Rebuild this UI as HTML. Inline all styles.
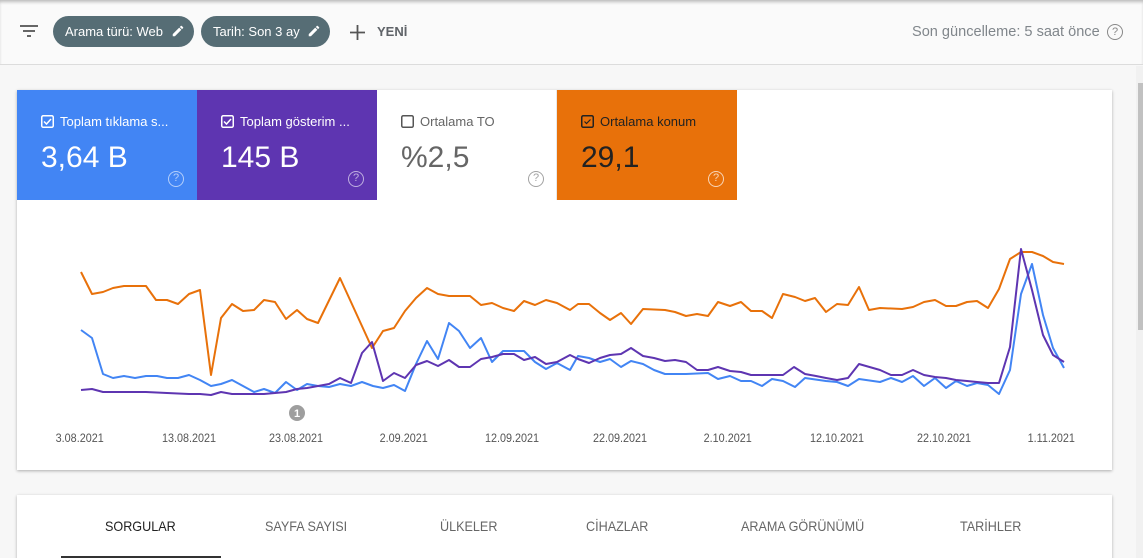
<!DOCTYPE html>
<html><head><meta charset="utf-8"><style>
*{margin:0;padding:0;box-sizing:border-box}
html,body{width:1143px;height:558px;overflow:hidden}
body{background:#f7f7f7;font-family:"Liberation Sans",Arial,sans-serif;position:relative}
.top{position:absolute;left:0;top:0;width:1143px;height:65px;background:#fafafa;border-bottom:1px solid #dcdcdc;box-shadow:inset 0 3px 3px -1px #bbb}
.chip{position:absolute;top:16px;height:31px;border-radius:16px;background:#566d75;color:#fff;font-size:13px;line-height:31px;padding-left:12px}
.chip svg{position:absolute;right:9px;top:8px}
.card{position:absolute;left:17px;top:90px;width:1095px;height:380px;background:#fff;box-shadow:0 1px 3px rgba(0,0,0,.3)}
.tile{position:absolute;top:0;width:180px;height:110px}
.tile .lb{position:absolute;left:24px;top:24px;font-size:13px;white-space:nowrap}
.tile .lb svg{vertical-align:-2px;margin-right:6px}
.tile .v{position:absolute;left:24px;top:51px;font-size:30px}
.tile .q{position:absolute;left:151px;top:81px;width:16px;height:16px;border:1.5px solid;border-radius:50%;font-size:11px;text-align:center;line-height:13px;opacity:.6}
.ax{position:absolute;top:341px;font-size:12px;color:#555;transform:scaleX(.9)}
.tabs{position:absolute;left:17px;top:495px;width:1095px;height:70px;background:#fff;box-shadow:0 1px 3px rgba(0,0,0,.3)}
.tab{position:absolute;top:23px;font-size:14px;color:#666;transform:scaleX(.9);transform-origin:left}
</style></head><body>
<div class="top">
<svg style="position:absolute;left:20px;top:24px" width="18" height="14"><path d="M0 2h18M3 7h12M7 12h4" stroke="#666" stroke-width="2"/></svg>
<div class="chip" style="left:53px;width:141px">Arama türü: Web<svg width="14" height="14" viewBox="0 0 24 24"><path fill="#fff" d="M3 17.25V21h3.75L17.81 9.94l-3.75-3.75L3 17.25zM20.71 7.04a1 1 0 000-1.41l-2.34-2.34a1 1 0 00-1.41 0l-1.83 1.83 3.75 3.75 1.83-1.83z"/></svg></div>
<div class="chip" style="left:201px;width:129px">Tarih: Son 3 ay<svg width="14" height="14" viewBox="0 0 24 24"><path fill="#fff" d="M3 17.25V21h3.75L17.81 9.94l-3.75-3.75L3 17.25zM20.71 7.04a1 1 0 000-1.41l-2.34-2.34a1 1 0 00-1.41 0l-1.83 1.83 3.75 3.75 1.83-1.83z"/></svg></div>
<svg style="position:absolute;left:350px;top:25px" width="15" height="15"><path d="M7.5 0v15M0 7.5h15" stroke="#555" stroke-width="1.8"/></svg>
<div style="position:absolute;left:377px;top:24px;font-size:13px;color:#5f6368;font-weight:bold">YENİ</div>
<div style="position:absolute;left:912px;top:23px;font-size:15px;color:#80868b;transform:scaleX(.97);transform-origin:left">Son güncelleme: 5 saat önce</div>
<div style="position:absolute;left:1107px;top:24px;width:16px;height:16px;border:1.4px solid #888;border-radius:50%;font-size:11px;color:#888;text-align:center;line-height:14px">?</div>
</div>
<div style="position:absolute;left:1136px;top:66px;width:7px;height:492px;background:#f1f1f1"></div>
<div style="position:absolute;left:1138px;top:83px;width:5px;height:247px;background:#c1c1c1"></div>
<div class="card">
<div class="tile" style="left:0;background:#4285f4;color:#fff"><div class="lb"><svg width="13" height="13"><rect x=".75" y=".75" width="11.5" height="11.5" rx="1.5" fill="none" stroke="#fff" stroke-width="1.5"/><path d="M3 6.5l2.5 2.5L10 4" fill="none" stroke="#fff" stroke-width="1.5"/></svg>Toplam tıklama s...</div><div class="v">3,64 B</div><div class="q">?</div></div>
<div class="tile" style="left:180px;background:#5e35b1;color:#fff"><div class="lb"><svg width="13" height="13"><rect x=".75" y=".75" width="11.5" height="11.5" rx="1.5" fill="none" stroke="#fff" stroke-width="1.5"/><path d="M3 6.5l2.5 2.5L10 4" fill="none" stroke="#fff" stroke-width="1.5"/></svg>Toplam gösterim ...</div><div class="v">145 B</div><div class="q">?</div></div>
<div class="tile" style="left:360px;background:#fff;color:#666;border-right:1px solid #e8e8e8"><div class="lb"><svg width="13" height="13"><rect x=".75" y=".75" width="11.5" height="11.5" rx="1.5" fill="none" stroke="#555" stroke-width="1.5"/></svg>Ortalama TO</div><div class="v">%2,5</div><div class="q">?</div></div>
<div class="tile" style="left:540px;background:#e8710a;color:#222"><div class="lb"><svg width="13" height="13"><rect x=".75" y=".75" width="11.5" height="11.5" rx="1.5" fill="none" stroke="#222" stroke-width="1.5"/><path d="M3.5 6.5l2 2L9.5 4.5" fill="none" stroke="#222" stroke-width="1.2"/></svg>Ortalama konum</div><div class="v">29,1</div><div class="q" style="color:#fff;opacity:.7">?</div></div>
<div class="ax" style="left:36px">3.08.2021</div><div class="ax" style="left:142px">13.08.2021</div><div class="ax" style="left:249px">23.08.2021</div><div class="ax" style="left:360px">2.09.2021</div><div class="ax" style="left:465px">12.09.2021</div><div class="ax" style="left:573px">22.09.2021</div><div class="ax" style="left:684px">2.10.2021</div><div class="ax" style="left:790px">12.10.2021</div><div class="ax" style="left:897px">22.10.2021</div><div class="ax" style="left:1008px">1.11.2021</div>
</div>
<svg style="position:absolute;left:0;top:0" width="1143" height="470" fill="none" stroke-width="2" stroke-linejoin="round">
<polyline stroke="#e8710a" points="81,272 92,294 103,292 113,288 124,286 146,286 156,300 167,300 178,304 189,294 200,290 211,375 221,318 232,304 243,311 254,310 264,300 275,302 286,319 297,310 307,319 318,323 340,278 372,348 383,331 394,328 405,311 416,298 427,288 438,294 449,296 470,296 481,305 492,303 503,308 514,311 524,301 535,305 546,300 557,303 570,310 578,304 589,304 600,313 610,320 621,313 631,324 643,309 665,310 675,312 686,316 697,314 708,316 718,302 730,306 741,302 751,311 762,311 772,318 783,294 795,297 805,301 815,298 826,312 837,304 848,305 859,287 869,310 880,308 902,309 913,307 924,302 935,300 946,306 956,306 967,302 977,301 988,308 999,289 1010,259 1021,252 1032,252 1043,256 1053,262 1064,264"/>
<polyline stroke="#4285f4" points="81,330 92,338 103,374 113,378 124,376 135,378 146,376 157,376 167,378 178,378 189,375 200,380 211,386 221,384 232,380 243,386 254,392 264,389 275,393 286,382 297,390 307,384 318,386 329,387 340,384 351,386 362,382 373,386 383,388 394,385 405,391 416,364 427,341 438,359 449,323 459,331 470,348 481,338 492,362 503,351 524,351 535,362 546,369 557,363 570,370 578,356 589,358 600,362 610,359 621,367 631,361 643,364 654,370 665,374 686,374 708,373 718,379 730,376 741,381 751,381 762,386 772,379 783,381 795,387 805,378 826,381 837,382 848,386 859,379 880,382 891,378 902,382 913,376 924,386 935,378 946,388 956,381 967,386 977,383 988,385 999,394 1010,370 1021,294 1032,264 1043,315 1053,348 1064,368"/>
<polyline stroke="#5e35b1" points="81,390 92,389 103,392 113,392 146,392 167,393 189,394 200,394 211,395 221,392 232,394 264,394 275,393 286,392 297,389 307,388 318,386 329,384 340,378 351,383 362,353 372,342 383,381 394,373 405,378 416,365 427,361 438,366 449,360 459,367 470,367 481,359 492,357 503,354 514,354 524,360 535,357 546,364 557,362 570,355 578,359 589,363 600,358 610,355 621,354 631,348 643,356 654,358 665,361 675,360 686,362 697,370 708,370 718,367 730,371 741,372 751,375 762,375 783,375 794,367 805,374 816,376 826,378 837,380 848,378 859,364 880,370 891,375 902,375 913,370 924,375 935,377 946,378 956,380 967,381 977,382 988,383 999,383 1010,347 1021,249 1032,290 1043,335 1053,355 1064,362"/>
<circle cx="297" cy="413" r="8" fill="#9e9e9e" stroke="none"/><text x="297" y="417" fill="#fff" font-size="11" font-weight="bold" text-anchor="middle" font-family="Liberation Sans">1</text>
</svg>
<div class="tabs">
<div class="tab" style="left:88px;color:#222">SORGULAR</div>
<div class="tab" style="left:248px">SAYFA SAYISI</div>
<div class="tab" style="left:423px">ÜLKELER</div>
<div class="tab" style="left:569px">CİHAZLAR</div>
<div class="tab" style="left:724px">ARAMA GÖRÜNÜMÜ</div>
<div class="tab" style="left:943px">TARİHLER</div>
<div style="position:absolute;left:44px;top:61px;width:160px;height:2px;background:#333"></div>
</div>
</body></html>
